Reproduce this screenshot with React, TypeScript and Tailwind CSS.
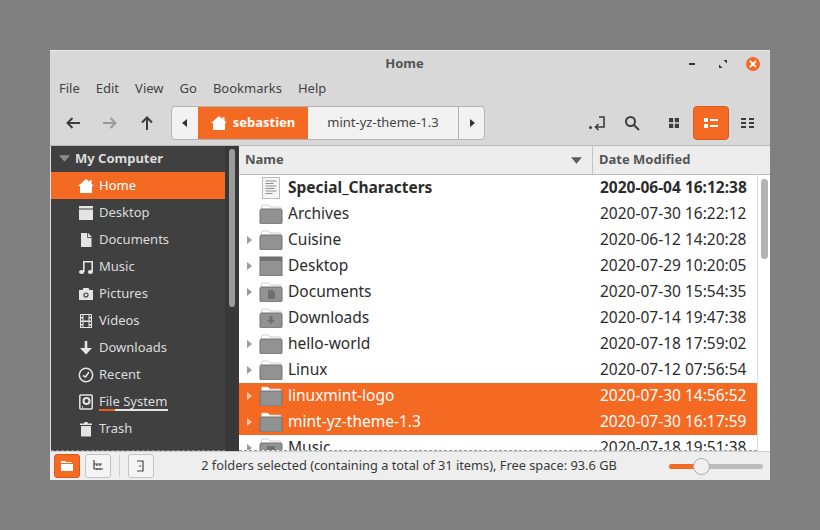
import { ReactNode } from "react"

const font = "font-['Noto_Sans','Open_Sans',sans-serif]"

function Arrow({ d, color }: { d: string; color: string }) {
  return (
    <svg width="16" height="16" viewBox="0 0 16 16" fill="none" stroke={color} strokeWidth="2">
      <path d={d} />
    </svg>
  )
}

function Tri({ dir, color = "#333", size = 10 }: { dir: "l" | "r" | "d"; color?: string; size?: number }) {
  const pts = dir === "l" ? "7,1 7,9 2,5" : dir === "r" ? "3,1 3,9 8,5" : "0,2 10,2 5,8"
  return (
    <svg width={size} height={size} viewBox="0 0 10 10">
      <polygon points={pts} fill={color} />
    </svg>
  )
}

function HomeIcon({ size = 16 }: { size?: number }) {
  return (
    <svg width={size} height={size} viewBox="0 0 16 16" fill="#fff">
      <path d="M8 1 L16 8 H14 V15 H2 V8 H0 Z" />
      <rect x="11.5" y="2" width="2" height="4" />
    </svg>
  )
}

function SideIcon({ name }: { name: string }) {
  const c = "#e4e4e4"
  switch (name) {
    case "Home":
      return <HomeIcon />
    case "Desktop":
      return (
        <svg width="16" height="16" viewBox="0 0 16 16" fill={c}>
          <path d="M1 1h14v14H1z" />
          <path d="M1 3.5h14v1H1z" fill="#404040" />
        </svg>
      )
    case "Documents":
      return (
        <svg width="16" height="16" viewBox="0 0 16 16" fill={c}>
          <path d="M3 1h7l3.5 3.5V15H3z" />
          <path d="M9.5 1v4.5H14" fill="none" stroke="#404040" strokeWidth="0.8" />
        </svg>
      )
    case "Music":
      return (
        <svg width="16" height="16" viewBox="0 0 16 16" fill={c}>
          <path d="M5 2h10v11h-1.6V3.600H6.600V13H5z" />
          <ellipse cx="3.600" cy="13" rx="2.600" ry="2" />
          <ellipse cx="12.400" cy="13" rx="2.600" ry="2" />
        </svg>
      )
    case "Pictures":
      return (
        <svg width="16" height="16" viewBox="0 0 16 16" fill={c}>
          <path d="M1 4h3.500l1-2h5l1 2H15v10H1z" />
          <circle cx="8" cy="9" r="2.600" fill="#404040" />
          <circle cx="8" cy="9" r="1.400" />
        </svg>
      )
    case "Videos":
      return (
        <svg width="16" height="16" viewBox="0 0 16 16" fill={c}>
          <path
            fillRule="evenodd"
            d="M2 1h12v14H2zM3 2v2h1.500V2zM3 5.500v2h1.500v-2zM3 9v2h1.500V9zM3 12.500V14h1.500v-1.500zM11.500 2v2H13V2zM11.500 5.500v2H13v-2zM11.500 9v2H13V9zM11.500 12.500V14H13v-1.500zM5.500 2v5.500h5V2zM5.500 9v5h5V9z"
          />
        </svg>
      )
    case "Downloads":
      return (
        <svg width="16" height="16" viewBox="0 0 16 16" fill={c}>
          <path d="M6.700 1h2.600v7H14l-6 6.500L2 8h4.700z" />
        </svg>
      )
    case "Recent":
      return (
        <svg width="16" height="16" viewBox="0 0 16 16" fill="none" stroke={c} strokeWidth="1.500">
          <circle cx="8" cy="8" r="6.700" />
          <path d="M5 8.500l2.500 1.500L11 5" />
        </svg>
      )
    case "File System":
      return (
        <svg width="16" height="16" viewBox="0 0 16 16" fill="none" stroke={c} strokeWidth="1.500">
          <rect x="1.800" y="1" width="12.400" height="14" rx="1" />
          <circle cx="8.500" cy="7" r="3" strokeWidth="2" />
          <path d="M4 13h1" />
        </svg>
      )
    default:
      return (
        <svg width="16" height="16" viewBox="0 0 16 16" fill={c}>
          <path d="M2 2.500h4l.5-1.500h3l.5 1.500h4v1.500H2z" />
          <path d="M3 5h10v10.500H3z" />
        </svg>
      )
  }
}

function Folder({ tab = "#fff", kind }: { tab?: string; kind?: string }) {
  return (
    <svg width="24" height="20" viewBox="0 0 24 20">
      <path d="M2.500 4 V2.200 Q2.500 1 3.700 1 H9 L11 3 H21 Q22 3 22 4 V6 H2.500 Z" fill={tab} stroke="#c4c4c4" strokeWidth="0.8" />
      <rect x="1" y="5" width="22" height="15" rx="1.500" fill="#929292" stroke="#707070" />
      {kind === "doc" && <path d="M9 8h4.500L16 10.500V17H9z" fill="#6f6f6f" />}
      {kind === "down" && <path d="M10.500 8h3v4h2.500l-4 4-4-4h2.500z" fill="#6f6f6f" />}
      {kind === "music" && <rect x="8" y="8" width="8" height="6" fill="#6f6f6f" />}
    </svg>
  )
}

function DesktopFolder() {
  return (
    <svg width="24" height="20" viewBox="0 0 24 20">
      <rect x="1" y="1" width="22" height="19" fill="#929292" stroke="#707070" />
      <rect x="1" y="1" width="22" height="4" fill="#707070" />
    </svg>
  )
}

function TextFile() {
  return (
    <svg width="18" height="22" viewBox="0 0 18 22">
      <rect x="0.500" y="0.500" width="17" height="21" fill="#f6f6f6" stroke="#bcbcbc" />
      <path d="M3.500 4h11M3.500 6.500h8M3.500 9h11M3.500 11.500h9M3.500 14h11M3.500 16.500h7" stroke="#8f8f8f" strokeWidth="1.200" />
    </svg>
  )
}

type Row = { name: string; date: string; expand?: boolean; selected?: boolean; bold?: boolean; icon?: ReactNode }

const rows: Row[] = [
  { name: "Special_Characters", date: "2020-06-04 16:12:38", bold: true, icon: <TextFile /> },
  { name: "Archives", date: "2020-07-30 16:22:12" },
  { name: "Cuisine", date: "2020-06-12 14:20:28", expand: true },
  { name: "Desktop", date: "2020-07-29 10:20:05", expand: true, icon: <DesktopFolder /> },
  { name: "Documents", date: "2020-07-30 15:54:35", expand: true, icon: <Folder kind="doc" /> },
  { name: "Downloads", date: "2020-07-14 19:47:38", icon: <Folder kind="down" /> },
  { name: "hello-world", date: "2020-07-18 17:59:02", expand: true },
  { name: "Linux", date: "2020-07-12 07:56:54", expand: true },
  { name: "linuxmint-logo", date: "2020-07-30 14:56:52", expand: true, selected: true },
  { name: "mint-yz-theme-1.3", date: "2020-07-30 16:17:59", expand: true, selected: true },
  { name: "Music", date: "2020-07-18 19:51:38", expand: true, icon: <Folder kind="music" /> },
]

const places = ["Home", "Desktop", "Documents", "Music", "Pictures", "Videos", "Downloads", "Recent", "File System", "Trash"]

function Sidebar() {
  return (
    <div className="flex w-[188px] h-full bg-[#404040] border-l border-[#e2e2e2]">
      <div className="w-[174px] h-full overflow-hidden border-b border-dashed border-[#8a8a8a]">
        <div className="h-[26px] flex items-center pl-[8px] gap-[5px] pb-[1px] text-[13px] font-bold text-[#dcdcdc]">
          <Tri dir="d" color="#8c8c8c" size={11} />
          <span>My Computer</span>
        </div>
        {places.map((p) => (
          <div
            key={p}
            className={
              "h-[27px] flex items-center pl-[26px] gap-[4px] text-[13px] " +
              (p === "Home" ? "bg-[#f56a23] text-white" : "text-[#dcdcdc]")
            }
          >
            <span className="w-[18px] flex justify-center">
              <SideIcon name={p} />
            </span>
            {p === "File System" ? (
              <span className="flex flex-col -mt-[1px]">
                <span className="leading-[16px]">{p}</span>
                <span className="flex h-[2px] -mb-[2px]">
                  <span className="w-[16px] bg-[#f05a14]" />
                  <span className="w-[53px] bg-[#e4e4e4]" />
                </span>
              </span>
            ) : (
              <span>{p}</span>
            )}
          </div>
        ))}
      </div>
      <div className="w-[13px] h-full bg-[#383838] pt-[3px] flex justify-center">
        <div className="w-[6px] h-[158px] rounded-full bg-[#9c9c9c]" />
      </div>
    </div>
  )
}

function FileList() {
  return (
    <div className="flex-1 flex flex-col min-w-0 bg-white border-l border-[#3a3a3a]">
      <div className="flex h-[29px] shrink-0 bg-[#ededed] border-b border-[#bdbdbd] text-[13px] font-bold text-[#555]">
        <div className="w-[354px] flex items-center justify-between pl-[6px] pr-[10px] border-r border-[#c4c4c4]">
          <span>Name</span>
          <Tri dir="d" color="#5c5c5c" size={11} />
        </div>
        <div className="w-[164px] flex items-center pl-[6px]">Date Modified</div>
      </div>
      <div className="flex flex-1 min-h-0">
        <div className="flex-1 overflow-hidden border-b border-dashed border-[#9a9a9a]">
          {rows.map((r) => (
            <div
              key={r.name}
              className={
                "flex h-[26px] shrink-0 items-center text-[15.5px] " +
                (r.selected ? "bg-[#f56a23] text-white " : "text-[#2c2c2c] ") +
                (r.bold ? "font-bold" : "")
              }
            >
              <div className="w-[353px] flex items-center pl-[5px]">
                <span className="w-[10px] flex justify-center">
                  {r.expand && <Tri dir="r" color={r.selected ? "#ffc9a8" : "#9a9a9a"} />}
                </span>
                <span className="w-[24px] ml-[5px] flex justify-center">{r.icon ?? <Folder />}</span>
                <span className="ml-[5px] truncate">{r.name}</span>
              </div>
              <div className="pl-[8px] whitespace-nowrap">{r.date}</div>
            </div>
          ))}
        </div>
        <div className="w-[13px] bg-white border-l border-[#dcdcdc] pt-[4px] flex justify-center">
          <div className="w-[7px] h-[80px] rounded-full bg-[#b3b3b3]" />
        </div>
      </div>
    </div>
  )
}

function Toolbar() {
  return (
    <div className="flex items-center h-[46px] shrink-0 border-b border-[#b8b8b8]">
      <div className="w-[121px] flex">
        <span className="w-[37px] ml-[4px] flex justify-center">
          <Arrow d="M15 8H2M7.500 3L2.500 8l5 5" color="#3c3c3c" />
        </span>
        <span className="w-[37px] flex justify-center">
          <Arrow d="M1 8h13M8.500 3l5 5-5 5" color="#9a9a9a" />
        </span>
        <span className="w-[37px] flex justify-center">
          <Arrow d="M8 15V2M3 7.500L8 2.500l5 5" color="#3c3c3c" />
        </span>
      </div>
      <div className="flex h-[34px] w-[314px] rounded-[4px] border border-[#b4b4b4] bg-[#f2f2f2] text-[13px] overflow-hidden">
        <div className="w-[26px] flex items-center justify-center">
          <Tri dir="l" />
        </div>
        <div className="w-[110px] bg-[#f56a23] text-white font-bold flex items-center justify-center gap-[6px]">
          <HomeIcon />
          <span>sebastien</span>
        </div>
        <div className="w-[151px] border-r border-[#b4b4b4] flex items-center justify-center text-[#444]">mint-yz-theme-1.3</div>
        <div className="flex-1 flex items-center justify-center">
          <Tri dir="r" />
        </div>
      </div>
      <svg className="ml-[103px]" width="20" height="16" viewBox="0 0 20 16" fill="none" stroke="#3c3c3c" strokeWidth="1.600">
        <path d="M11 2h5v10H8M10.500 9l-3 3 3 3" />
        <circle cx="2.500" cy="12.500" r="1.500" fill="#3c3c3c" stroke="none" />
      </svg>
      <svg className="ml-[16px]" width="16" height="16" viewBox="0 0 16 16" fill="none" stroke="#3c3c3c" strokeWidth="2">
        <circle cx="6.500" cy="6.500" r="4.500" />
        <path d="M10 10l5 5" />
      </svg>
      <svg className="ml-[29px]" width="10" height="10" viewBox="0 0 10 10" fill="#3c3c3c">
        <path d="M0 0h4.200v4.200H0zM5.800 0H10v4.200H5.800zM0 5.800h4.200V10H0zM5.800 5.800H10V10H5.800z" />
      </svg>
      <div className="ml-[14px] w-[36px] h-[34px] rounded-[4px] bg-[#f56a23] border border-[#d65a1b] flex items-center justify-center">
        <svg width="14" height="10" viewBox="0 0 14 10" fill="#fff">
          <path d="M0 0h4v4H0zM6 1h8v2H6zM0 6h4v4H0zM6 7h8v2H6z" />
        </svg>
      </div>
      <svg className="ml-[12px]" width="13" height="10" viewBox="0 0 13 10" fill="#3c3c3c">
        <path d="M0 0h5v2H0zM8 0h5v2H8zM0 4h5v2H0zM8 4h5v2H8zM0 8h5v2H0zM8 8h5v2H8z" />
      </svg>
    </div>
  )
}

function StatusBar() {
  return (
    <div className="h-[29px] shrink-0 flex items-center bg-[#eeeeee] border-t border-[#cfcfcf] pl-[4px] text-[12.8px] text-[#3a3a3a]">
      <div className="w-[26px] h-[24px] rounded-[3px] bg-[#f56a23] border border-[#d65a1b] flex items-center justify-center">
        <svg width="12" height="10" viewBox="0 0 12 10" fill="#fff">
          <path d="M0 0h4l1 1h6v1H0zM0 3h12v7H0z" />
        </svg>
      </div>
      <div className="ml-[5px] w-[26px] h-[24px] rounded-[3px] bg-[#f4f4f4] border border-[#c4c4c4] flex items-center justify-center">
        <svg width="12" height="12" viewBox="0 0 12 12" fill="none" stroke="#444" strokeWidth="1.200">
          <path d="M2 0v9h9M2 4h8M5 4v2M8 4v2M5 8v2M8 8v2" />
        </svg>
      </div>
      <div className="ml-[8px] w-px h-[22px] bg-[#cfcfcf]" />
      <div className="ml-[8px] w-[26px] h-[24px] rounded-[3px] bg-[#f4f4f4] border border-[#c4c4c4] flex items-center justify-center">
        <svg width="10" height="12" viewBox="0 0 10 12" fill="none" stroke="#444" strokeWidth="1.200">
          <path d="M1 1h6v10H1M3 6h2" />
        </svg>
      </div>
      <div className="w-[510px] text-center whitespace-nowrap">2 folders selected (containing a total of 31 items), Free space: 93.6 GB</div>
      <div className="relative w-[94px] h-[5px] ml-[5px] rounded-full bg-[#bdbdbd]">
        <div className="w-[26px] h-full rounded-full bg-[#f56a23]" />
        <div className="absolute left-[24px] -top-[6px] w-[17px] h-[17px] rounded-full bg-[#f0f0f0] border border-[#ababab]" />
      </div>
    </div>
  )
}

export default function App() {
  return (
    <div className={"w-[820px] h-[530px] bg-[#808080] pt-[50px] pl-[50px] overflow-hidden " + font}>
      <div className="w-[720px] h-[430px] flex flex-col bg-[#d8d8d8] border-t border-[#ececec]">
        <div className="h-[25px] shrink-0 flex items-center pl-[24px] pr-[10px]">
          <span className="flex-1 text-center text-[13px] font-bold text-[#555] pl-[46px]">Home</span>
          <span className="flex items-center">
            <span className="w-[6px] h-[2px] bg-[#333]" />
            <svg className="ml-[24px]" width="8" height="8" viewBox="0 0 8 8" fill="#333">
              <path d="M4.500 0H8v3.500zM3.500 8H0V4.500z" />
            </svg>
            <span className="ml-[19px] w-[14px] h-[14px] rounded-full bg-[#f56a23] flex items-center justify-center">
              <svg width="8" height="8" viewBox="0 0 8 8" stroke="#fff" strokeWidth="1.800">
                <path d="M1 1l6 6M7 1l-6 6" />
              </svg>
            </span>
          </span>
        </div>
        <div className="h-[24px] shrink-0 flex items-center pl-[9px] pt-[2px] gap-[16px] text-[13px] text-[#444]">
          {["File", "Edit", "View", "Go", "Bookmarks", "Help"].map((m) => (
            <span key={m}>{m}</span>
          ))}
        </div>
        <Toolbar />
        <div className="flex-1 flex min-h-0">
          <Sidebar />
          <FileList />
        </div>
        <StatusBar />
      </div>
    </div>
  )
}
